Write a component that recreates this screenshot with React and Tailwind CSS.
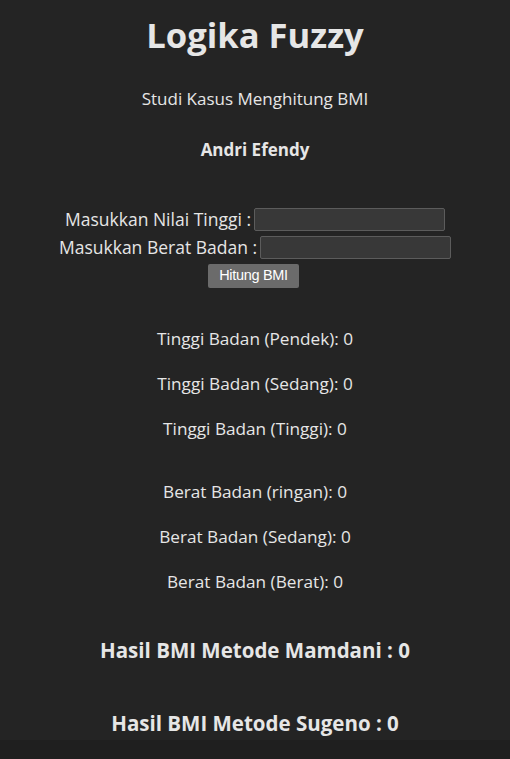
export default function App() {
  const tinggi = [
    ['Tinggi Badan (Pendek)', 0],
    ['Tinggi Badan (Sedang)', 0],
    ['Tinggi Badan (Tinggi)', 0],
  ];
  const berat = [
    ['Berat Badan (ringan)', 0],
    ['Berat Badan (Sedang)', 0],
    ['Berat Badan (Berat)', 0],
  ];

  return (
    <div className="min-h-screen bg-[#1f1f1f] font-['Open_Sans',sans-serif] text-[#e6e6e6]">
      <div className="flex h-[740px] flex-col items-center bg-[#242424] text-center">
        <h1 className="mt-[13px] text-[34.6px] font-bold leading-[44px]">Logika Fuzzy</h1>
        <p className="mt-[30px] text-[17px] leading-6">Studi Kasus Menghitung BMI</p>
        <p className="mt-[27px] text-[17px] font-bold leading-6">Andri Efendy</p>

        {/* Form */}
        <div className="mt-[43px] flex flex-col items-center">
          <div className="flex h-[28px] items-center gap-[3px] text-[17.5px]">
            <label>Masukkan Nilai Tinggi :</label>
            <input className="h-[23px] w-[191px] rounded-[2px] border border-[#5c5c5c] bg-[#383838] outline-none" />
          </div>
          <div className="flex h-[28px] items-center gap-[3px] text-[17.5px]">
            <label>Masukkan Berat Badan :</label>
            <input className="h-[23px] w-[191px] rounded-[2px] border border-[#5c5c5c] bg-[#383838] outline-none" />
          </div>
          <button className="mt-[3px] mr-[3px] h-[24px] w-[91px] rounded-[2px] bg-[#6b6b6b] font-['Liberation_Sans',sans-serif] text-[14.5px] tracking-[-0.3px] text-white">
            Hitung BMI
          </button>
        </div>

        <div className="mt-[39px] flex flex-col gap-[21px] text-[17.2px] leading-6">
          {tinggi.map(([label, v]) => (
            <p key={label}>{label}: {v}</p>
          ))}
        </div>

        <div className="mt-[39px] flex flex-col gap-[21px] text-[17.2px] leading-6">
          {berat.map(([label, v]) => (
            <p key={label}>{label}: {v}</p>
          ))}
        </div>

        <h3 className="mt-[42px] text-[20.5px] font-bold leading-7">Hasil BMI Metode Mamdani : 0</h3>
        <h3 className="mt-[45px] text-[20.5px] font-bold leading-7">Hasil BMI Metode Sugeno : 0</h3>
      </div>
    </div>
  );
}
